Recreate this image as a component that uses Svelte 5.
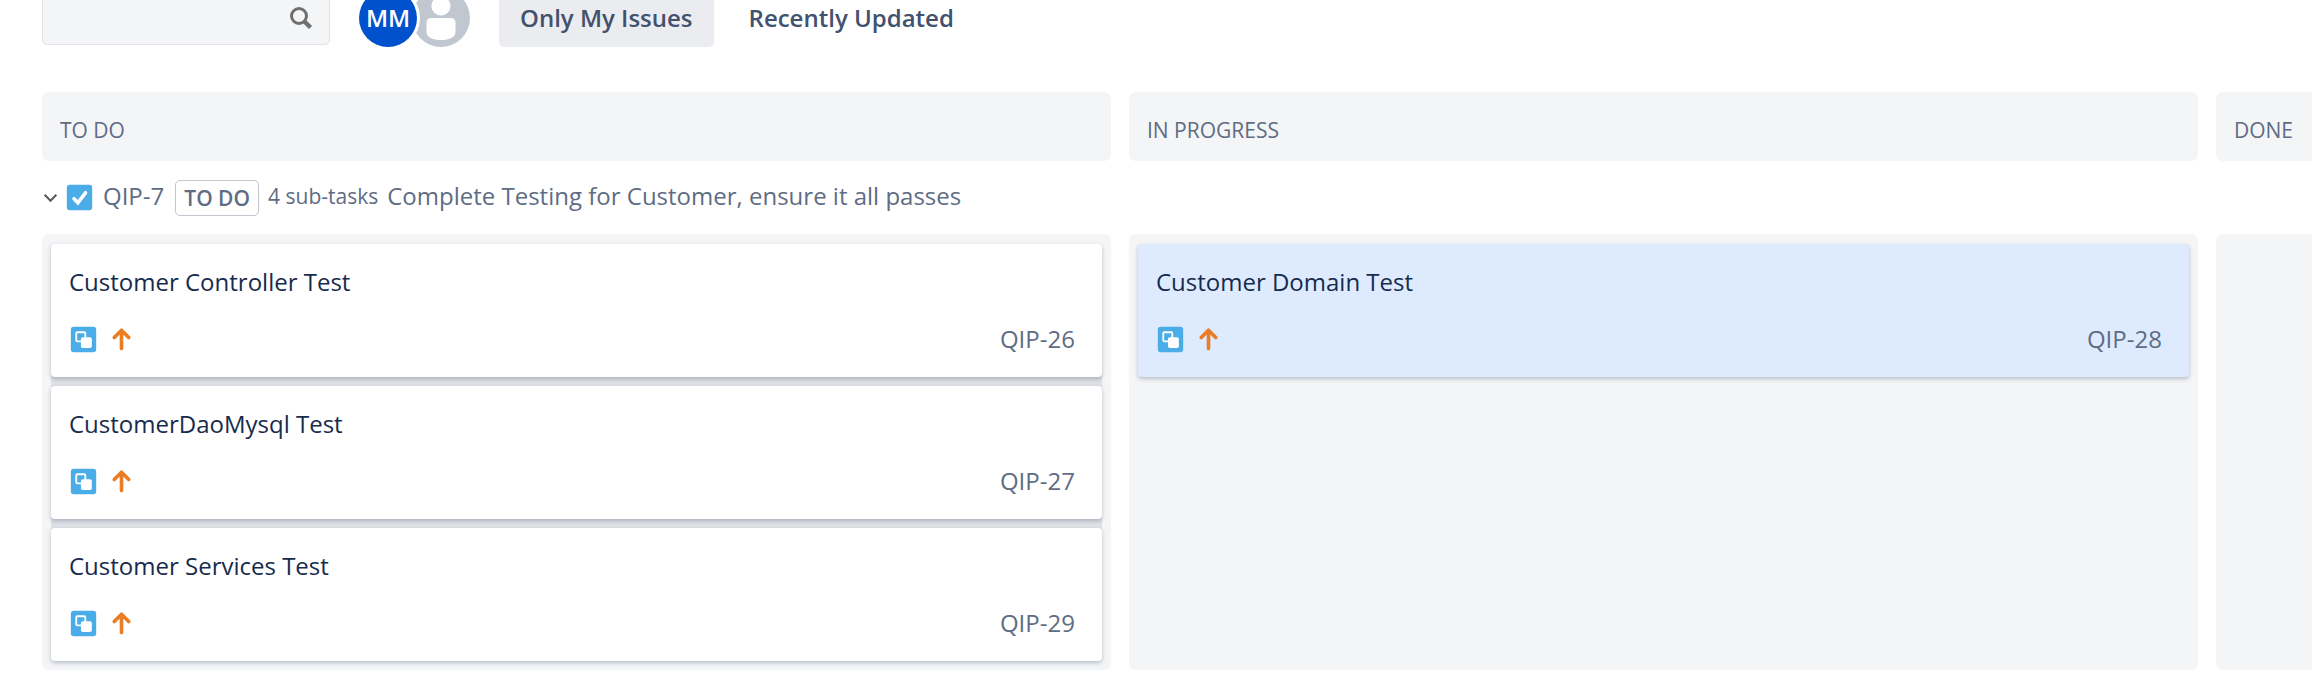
<script>
  const columns = [
    {
      name: 'TO DO',
      cards: [
        { key: 'QIP-26', title: 'Customer Controller Test' },
        { key: 'QIP-27', title: 'CustomerDaoMysql Test' },
        { key: 'QIP-29', title: 'Customer Services Test' }
      ]
    },
    {
      name: 'IN PROGRESS',
      cards: [{ key: 'QIP-28', title: 'Customer Domain Test', selected: true }]
    },
    { name: 'DONE', cards: [] }
  ];

  let onlyMine = $state(true);
  let recent = $state(false);
  let open = $state(true);
</script>

<main>
  <header class="toolbar">
    <label class="search">
      <input type="text" aria-label="Search this board" />
      <svg viewBox="0 0 24 24" aria-hidden="true">
        <circle cx="10" cy="10" r="7.5" fill="none" stroke="#707070" stroke-width="3" />
        <path d="M15.5 15.5L21.5 21.5" stroke="#707070" stroke-width="4.4" />
      </svg>
    </label>

    <div class="avatars">
      <button class="avatar me" aria-label="Filter by MM">MM</button>
      <button class="avatar nobody" aria-label="Filter by unassigned">
        <svg viewBox="0 0 58 58" aria-hidden="true">
          <circle cx="29" cy="17" r="9.6" fill="#fff" />
          <path d="M19.500 29H38.500Q43.500 29 43.500 34V43C43.500 48.500 37 51 29 51S14.500 48.500 14.500 43V34Q14.500 29 19.500 29Z" fill="#fff" />
        </svg>
      </button>
    </div>

    <div class="filters">
      <button class:active={onlyMine} onclick={() => (onlyMine = !onlyMine)}>Only My Issues</button>
      <button class:active={recent} onclick={() => (recent = !recent)}>Recently Updated</button>
    </div>
  </header>

  <div class="board">
    <div class="columns">
      {#each columns as column}
        <h2>{column.name}</h2>
      {/each}
    </div>

    <div class="lane">
      <button class="toggle" aria-label="Toggle sub-tasks" aria-expanded={open} onclick={() => (open = !open)}>
        <svg viewBox="0 0 16 16" aria-hidden="true">
          <path d="M2.500 5.500L8 11L13.500 5.500" fill="none" stroke="#5c5c5c" stroke-width="2" />
        </svg>
      </button>
      <svg class="type" viewBox="0 0 16 16" aria-hidden="true">
        <rect x="1" y="1" width="14" height="14" rx="1.600" fill="#4bade8" />
        <path d="M5 8.700L7.100 10.900L11.300 5.400" fill="none" stroke="#fff" stroke-width="2" stroke-linecap="round" />
      </svg>
      <a class="key" href="#QIP-7">QIP-7</a>
      <span class="status">TO DO</span>
      <span class="count">4 sub-tasks</span>
      <span class="summary">Complete Testing for Customer, ensure it all passes</span>
    </div>

    {#if open}
      <div class="columns">
        {#each columns as column}
          <section aria-label={column.name}>
            <div class="cards">
              {#each column.cards as card}
                <article class:selected={card.selected}>
                  <h3>{card.title}</h3>
                  <div class="meta">
                    <svg viewBox="0 0 16 16" aria-hidden="true">
                      <rect x="1" y="1" width="14" height="14" rx="1.600" fill="#4bade8" />
                      <rect x="4" y="4" width="5" height="5" rx="0.600" fill="none" stroke="#fff" stroke-width="1" />
                      <rect x="6.600" y="6.700" width="6" height="6" rx="1" fill="#fff" />
                    </svg>
                    <svg viewBox="0 0 16 16" aria-hidden="true">
                      <path d="M8 13V3M4 6.900L8 2.900L12 6.900" fill="none" stroke="#ea7d24" stroke-width="2" stroke-linecap="round" stroke-linejoin="round" />
                    </svg>
                    <a class="key" href="#{card.key}">{card.key}</a>
                  </div>
                </article>
              {/each}
            </div>
          </section>
        {/each}
      </div>
    {/if}
  </div>
</main>

<style>
  :global(body) {
    margin: 0;
    background: #fff;
  }

  main {
    overflow: hidden;
    padding-left: 42px;
    color: #5e6c84;
    font-family: "Open Sans", "Noto Sans", sans-serif;
    font-size: 24px;
    line-height: 36px;
  }

  button {
    border: 0;
    padding: 0;
    background: none;
    font: inherit;
    cursor: pointer;
  }

  svg {
    display: block;
    flex: none;
  }

  a {
    color: inherit;
    text-decoration: none;
  }

  .toolbar {
    display: flex;
    align-items: center;
    gap: 29px;
    height: 58px;
    margin: -11px 0 45px;
  }

  .search {
    display: flex;
    align-items: center;
    box-sizing: border-box;
    width: 288px;
    height: 54px;
    padding-right: 16px;
    border: 1px solid #dfe1e6;
    border-radius: 5px;
    background: #f4f5f7;
  }

  .search input {
    flex: 1;
    min-width: 0;
    padding: 0 14px;
    border: 0;
    outline: 0;
    background: none;
    font: inherit;
  }

  .search svg {
    width: 24px;
    height: 24px;
  }

  .avatars {
    display: flex;
  }

  .avatar {
    width: 58px;
    height: 58px;
    border-radius: 50%;
  }

  .me {
    z-index: 1;
    background: #0052cc;
    box-shadow: 0 0 0 3px #fff;
    color: #fff;
    font-weight: 600;
  }

  .nobody {
    margin-left: -5px;
    background: #c1c7d0;
  }

  .filters {
    display: flex;
    gap: 14px;
  }

  .filters button {
    height: 58px;
    padding: 0 21px;
    border-radius: 5px;
    color: #42526e;
    font-weight: 600;
  }

  .filters .active {
    background: #ebecf0;
  }

  .board {
    width: calc(100% * 10 / 7);
  }

  .columns {
    display: grid;
    grid-template-columns: repeat(3, 1fr);
    gap: 18px;
  }

  h2 {
    margin: 0;
    padding: 20px 18px 13px;
    border-radius: 7px;
    background: #f4f5f7;
    font-size: 21px;
    font-weight: 400;
  }

  .lane {
    display: flex;
    align-items: center;
    height: 73px;
  }

  .lane .key,
  .count,
  .summary {
    padding-bottom: 3px;
  }

  .toggle svg {
    width: 17px;
    height: 17px;
  }

  .lane .type {
    width: 29px;
    height: 29px;
    margin: 0 9px 0 6px;
  }

  .status {
    margin: 0 9px 0 11px;
    padding: 0 8px;
    border: 1px solid #c1c7d0;
    border-radius: 5px;
    font-size: 21px;
    font-weight: 600;
    line-height: 34px;
  }

  .count {
    margin-right: 9px;
    font-size: 21px;
  }

  section {
    padding: 10px 9px 9px;
    border-radius: 7px;
    background: #f4f5f7;
  }

  .cards {
    display: grid;
    gap: 9px;
    border-radius: 4px;
    background: #dfe1e6;
  }

  article {
    padding: 20px 18px;
    border-radius: 4px;
    background: #fff;
    box-shadow: 0 2px 4px rgba(9, 30, 66, 0.25);
  }

  .selected {
    background: #deebff;
  }

  h3 {
    margin: 0 0 21px;
    color: #172b4d;
    font-size: 24px;
    font-weight: 400;
  }

  .meta {
    display: flex;
    align-items: center;
    gap: 9px;
    height: 36px;
  }

  .meta svg {
    width: 29px;
    height: 29px;
  }

  .meta .key {
    margin: 0 9px 0 auto;
  }
</style>
